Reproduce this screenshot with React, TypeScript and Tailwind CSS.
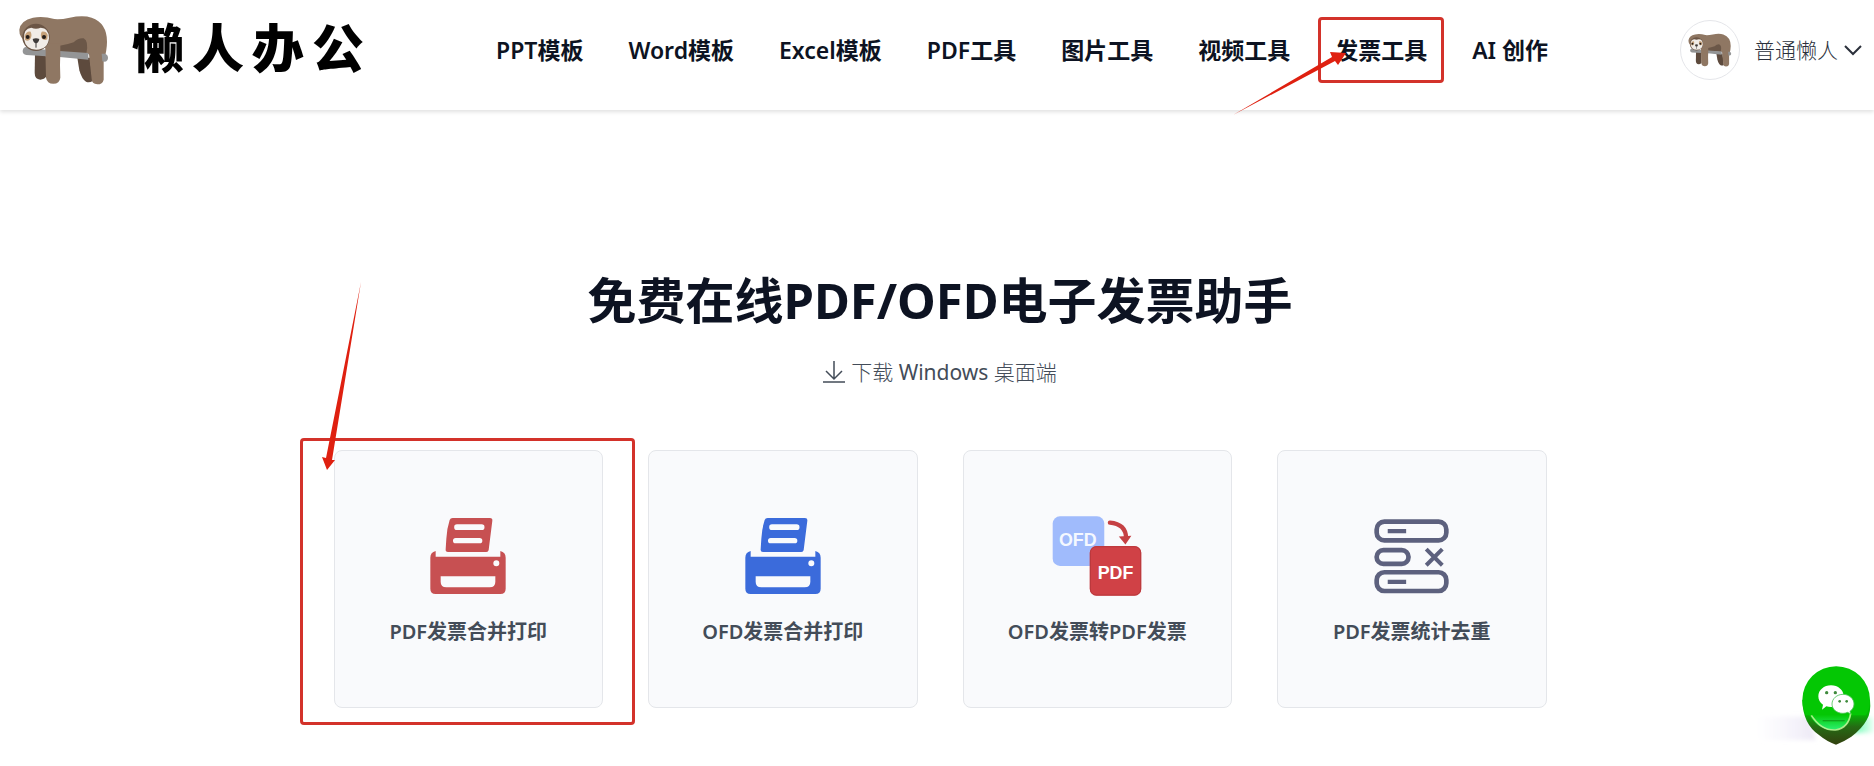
import { useId, type ReactNode } from "react";

const NAV_ITEMS = ["PPT模板", "Word模板", "Excel模板", "PDF工具", "图片工具", "视频工具", "发票工具", "AI 创作"];
const HIGHLIGHTED_NAV = "发票工具";

function Sloth({ className }: { className: string }) {
  return (
    <svg viewBox="56 44 274 210" className={className} aria-hidden="true">
      <path d="M106 160h34v68q-6 10-18 10-17-1-17-20z" fill="#5d4a3d" />
      <path d="M233 172h38l8 70q-10 6-20 2-12-6-20-34z" fill="#5d4a3d" />
      <path
        d="M100 52q30-6 64 4 18 2 46-4 40-8 66 0 46 16 46 72 0 26-10 60v54q-3 14-19 14-17-1-17-16l-8-74-86-8q-2 40 0 78-2 18-21 18t-22-18l-2-90-50-10q-30-20-28-44 4-28 41-36z"
        fill="#8f7763"
      />
      <path d="M180 136q20-2 42-10 14-14 30-12 16 8 8 46l-80-6z" fill="#6b5748" />
      <path d="M78 140q30 6 62 8v20l-60-4q-11-2-11-12 1-10 9-12z" fill="#949596" />
      <path d="M180 152l86 6v20l-86-8zM306 160h10q9 3 9 12t-9 12l-8-1z" fill="#949596" />
      <path d="M138 130h44v40h-44z" fill="#8f7763" />
      <circle cx="109" cy="111" r="41" fill="#6b5545" />
      <path d="M73 116q-2-32 22-34 14 6 28 0 25 0 25 32-4 34-38 34-32 0-37-32z" fill="#f1ece7" />
      <path d="M75 108q4-16 18-14 6 14-3 24-8 6-14 0zM144 104q-4-12-18-10-6 12 2 22 8 6 15 1z" fill="#c6a179" />
      <circle cx="84" cy="110" r="6" fill="#241d1a" />
      <circle cx="133" cy="110" r="6" fill="#241d1a" />
      <path d="M99 116q10-5 20 0-2 12-10 13-8-1-10-13z" fill="#3f3b3a" />
      <path d="M109 128v14" stroke="#3f3b3a" strokeWidth="3" />
    </svg>
  );
}

function PrinterIcon({ className }: { className: string }) {
  return (
    <svg viewBox="0 0 226 228" className={className} aria-hidden="true">
      <path
        fill="currentColor"
        fillRule="evenodd"
        d="M67 0h112q8 0 7 8l-11 88q-1 6-7 6H53q-8 0-7-8l2-32q2-32 10-56 2-6 9-6zM80 19a8 8 0 0 0 0 17h74a8 8 0 0 0 0-17zM76 60a8 8 0 0 0 0 16h72a8 8 0 0 0 0-16z"
      />
      <path
        fill="currentColor"
        fillRule="evenodd"
        d="M16 99v17h194V99q16 4 16 20v93q0 16-16 16H16q-16 0-16-16v-93q0-16 16-20zM198 127a9 9 0 1 0 0 18 9 9 0 0 0 0-18zM31 175v16q0 17 17 17h130q17 0 17-17v-16z"
      />
    </svg>
  );
}

function ConvertIcon() {
  return (
    <svg viewBox="0 0 270 242" className="h-20 w-[90px]" aria-hidden="true">
      <rect x="1" y="1" width="156" height="150" rx="22" fill="#a0bbfc" />
      <text x="20" y="92" fill="#f4f8ff" className="font-['Liberation_Sans',sans-serif] text-[54px] font-bold">
        OFD
      </text>
      <path d="M174 20q48 4 49 46" fill="none" stroke="#c54043" strokeWidth="13" strokeLinecap="round" />
      <path d="M201 62l38-2-18 26z" fill="#c54043" />
      <rect x="113" y="91" width="156" height="150" rx="20" fill="#d04146" />
      <rect x="115" y="93" width="152" height="146" rx="18" fill="none" stroke="#b8393d" strokeWidth="3" />
      <text x="137" y="191" fill="#fff" className="font-['Liberation_Sans',sans-serif] text-[54px] font-bold">
        PDF
      </text>
    </svg>
  );
}

function DedupeIcon() {
  return (
    <svg viewBox="0 0 224 224" className="size-[75px]" fill="none" stroke="#5d617e" strokeWidth="14" aria-hidden="true">
      <rect x="8" y="8" width="208" height="56" rx="23" />
      <rect x="8" y="93" width="95" height="41" rx="20" />
      <rect x="8" y="159" width="208" height="56" rx="23" />
      <path d="M41 36h55M41 188h55" strokeWidth="13" />
      <path d="M156 90l48 48M204 90l-48 48" strokeWidth="12" />
    </svg>
  );
}

function WeChatButton() {
  const id = useId();
  return (
    <button type="button" aria-label="WeChat" className="fixed right-0 bottom-4 flex w-[120px] justify-end">
      <svg viewBox="0 0 360 264" className="h-[88px] w-[120px]" aria-hidden="true">
        <defs>
          <linearGradient id={`${id}h`} x1="0" x2="1">
            <stop offset="0" stopColor="#f6f4fc" stopOpacity="0" />
            <stop offset="1" stopColor="#ece8f5" />
          </linearGradient>
          <linearGradient id={`${id}t`} x1="0" x2="0" y1="0" y2="1">
            <stop offset="0.3" stopColor="#04b804" />
            <stop offset="0.6" stopColor="#256b14" />
            <stop offset="1" stopColor="#33400f" />
          </linearGradient>
          <linearGradient id={`${id}u`} x1="0" x2="0" y1="0" y2="1">
            <stop offset="0" stopColor="#04c704" />
            <stop offset="1" stopColor="#2cf070" />
          </linearGradient>
          <linearGradient id={`${id}g`} x1="0" x2="1">
            <stop offset="0" stopColor="#5dfcaa" />
            <stop offset="1" stopColor="#5dfcaa" stopOpacity="0" />
          </linearGradient>
          <filter id={`${id}b`} x="-20%" y="-40%" width="140%" height="180%">
            <feGaussianBlur stdDeviation="7" />
          </filter>
        </defs>
        <path d="M0 164h165l20 70H0z" fill={`url(#${id}h)`} filter={`url(#${id}b)`} />
        <path d="M320 166h46v46h-70z" fill={`url(#${id}g)`} filter={`url(#${id}b)`} />
        <path d="M145 114h203q4 38-10 60-14 26-46 50-24 16-46 24-26-8-50-28-50-34-51-106z" fill={`url(#${id}t)`} />
        <path d="M145 114a101 101 0 0 1 203 0q0 26-12 46H156q-11-20-11-46z" fill="#04c704" />
        <path d="M166 158h124q-4 32-38 44-54 10-86-44z" fill={`url(#${id}u)`} />
        <path d="M172 160q30 46 72 44 40-6 46-50" fill="none" stroke="#c4f79a" strokeWidth="5" opacity="0.85" />
        <path d="M206 176h66" stroke="#10a51c" strokeWidth="4" />
        <path
          d="M231 70c21 0 38 14 38 33 0 18-17 32-38 32-5 0-10-1-14-2l-13 10 3-15c-9-6-14-15-14-25 0-19 17-33 38-33z"
          fill="#fff"
        />
        <path
          d="M267 97c18 0 33 13 33 29 0 9-5 17-12 22l2 8-9-5c-5 2-9 3-14 3-18 0-33-12-33-28s15-29 33-29z"
          fill="#fff"
          stroke="#4fc25a"
          strokeWidth="2.500"
        />
        <g fill="#3f8a3c">
          <circle cx="218" cy="92" r="5" />
          <circle cx="244" cy="92" r="5" />
          <circle cx="257" cy="118" r="4" />
          <circle cx="278" cy="118" r="4" />
        </g>
      </svg>
    </button>
  );
}

function NavArrow() {
  return (
    <svg viewBox="0 0 114 64" className="pointer-events-none absolute right-20 -bottom-[50px] z-10 h-16 w-[114px]" aria-hidden="true">
      <path d="M0 63L99 5l-2-5 16 1-8 12-3-4z" fill="#df2010" />
    </svg>
  );
}

function CardArrow() {
  return (
    <svg viewBox="0 0 44 188" className="pointer-events-none absolute bottom-[252px] left-[17px] h-[188px] w-11" aria-hidden="true">
      <path d="M41 0L12 178l3 0-8 10-5-13 4 1z" fill="#df2010" />
    </svg>
  );
}

function ToolCard({ label, icon, children }: { label: string; icon: ReactNode; children?: ReactNode }) {
  return (
    <div className="relative">
      <a
        href="#"
        className="flex h-[258px] flex-col items-center rounded-lg border border-[#e4e6ea] bg-[#f9fafc] pt-[65px]"
      >
        <span className="flex h-20 items-center justify-center">{icon}</span>
        <span className="mt-[22px] text-xl leading-7 font-semibold whitespace-nowrap text-[#434c58]">{label}</span>
      </a>
      {children}
    </div>
  );
}

export default function App() {
  return (
    <div className="min-h-screen overflow-x-clip bg-white font-['Noto_Sans','Noto_Sans_CJK_SC',sans-serif] text-[#0d1322]">
      <header className="flex h-[110px] items-center pr-3 pl-[18px] pb-[10px] shadow-[0_2px_4px_rgba(0,0,0,0.12)]">
        <a href="#" className="flex items-center" aria-label="懒人办公">
          <Sloth className="h-[70px] w-[92px]" />
          <span className="ml-[22px] flex gap-2 pb-1 text-[52px] leading-[60px] font-black text-black">
            {["懒", "人", "办", "公"].map((c) => (
              <span key={c}>{c}</span>
            ))}
          </span>
        </a>
        <nav className="ml-[132px] flex gap-[45px] text-[23px] leading-8 font-semibold whitespace-nowrap">
          {NAV_ITEMS.map((item) => (
            <div key={item} className="relative">
              <a href="#">{item}</a>
              {item === HIGHLIGHTED_NAV && (
                <>
                  <span className="pointer-events-none absolute -inset-x-[17px] -inset-y-[17px] rounded-sm border-3 border-[#d3322a]" />
                  <NavArrow />
                </>
              )}
            </div>
          ))}
        </nav>
        <button type="button" className="ml-auto flex items-center text-[#2b303b]">
          <span className="flex size-[60px] items-center justify-center rounded-full border border-[#e5e6ea]">
            <Sloth className="h-[34px] w-11" />
          </span>
          <span className="ml-[14px] text-[21px] leading-8 font-light whitespace-nowrap">普通懒人</span>
          <svg viewBox="0 0 18 12" className="ml-[6px] h-3 w-[18px]" fill="none" stroke="currentColor" strokeWidth="2" aria-hidden="true">
            <path d="M1 2l8 8 8-8" />
          </svg>
        </button>
      </header>

      <main className="pt-40 pl-[6px]">
        <h1 className="text-center text-[49px] leading-[60px] font-bold">免费在线PDF/OFD电子发票助手</h1>
        <a
          href="#"
          className="mx-auto mt-[26px] flex w-fit items-center gap-[6px] text-[21px] leading-8 font-light text-[#434c58]"
        >
          <svg viewBox="0 0 22 22" className="size-[22px]" fill="none" stroke="currentColor" strokeWidth="1.500" aria-hidden="true">
            <path d="M11 0v17M3 10l8 8 8-8M0 21h22" />
          </svg>
          <span>
            下载 <span className="font-normal">Windows</span> 桌面端
          </span>
        </a>
        <div className="mx-auto mt-[62px] grid max-w-[1213px] grid-cols-4 gap-[45px]">
          <ToolCard label="PDF发票合并打印" icon={<PrinterIcon className="size-[76px] text-[#c75052]" />}>
            <span className="pointer-events-none absolute -top-3 -right-8 -bottom-[17px] -left-[34px] rounded-sm border-3 border-[#d3322a]">
              <CardArrow />
            </span>
          </ToolCard>
          <ToolCard label="OFD发票合并打印" icon={<PrinterIcon className="size-[76px] text-[#3b6bdb]" />} />
          <ToolCard label="OFD发票转PDF发票" icon={<ConvertIcon />} />
          <ToolCard label="PDF发票统计去重" icon={<DedupeIcon />} />
        </div>
      </main>
      <WeChatButton />
    </div>
  );
}
